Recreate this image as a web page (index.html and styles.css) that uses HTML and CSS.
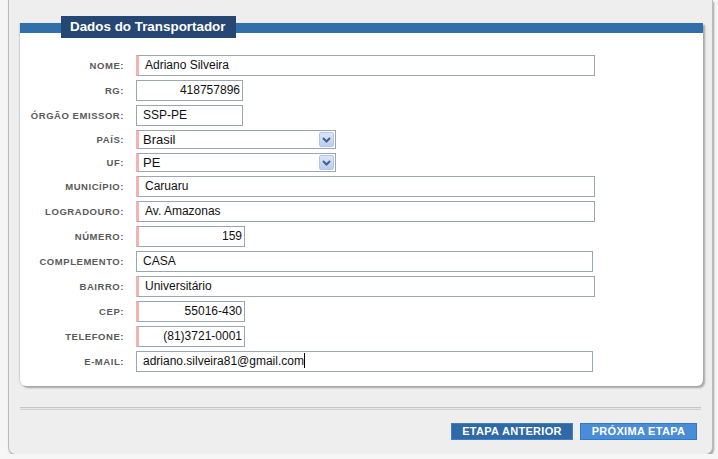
FILE: index.html
```html
<!DOCTYPE html>
<html lang="pt-BR">
<head>
<meta charset="utf-8">
<title>Dados do Transportador</title>
<link rel="stylesheet" href="styles.css">
</head>
<body>
<div class="panel">
  <div class="card">
    <div class="tab">Dados do Transportador</div>
    <div class="form">
      <div class="lbl">NOME:</div>
      <div class="field wide req">Adriano Silveira</div>

      <div class="lbl">RG:</div>
      <div class="field short num">418757896</div>

      <div class="lbl">ÓRGÃO EMISSOR:</div>
      <div class="field short">SSP-PE</div>

      <div class="lbl">PAÍS:</div>
      <div class="select req"><span class="sel-text">Brasil</span><span class="sel-btn"><svg width="9" height="6" viewBox="0 0 9 6"><path d="M1 1 L4.5 4.5 L8 1" fill="none" stroke="#4a5f86" stroke-width="2"/></svg></span></div>

      <div class="lbl">UF:</div>
      <div class="select req"><span class="sel-text">PE</span><span class="sel-btn"><svg width="9" height="6" viewBox="0 0 9 6"><path d="M1 1 L4.5 4.5 L8 1" fill="none" stroke="#4a5f86" stroke-width="2"/></svg></span></div>

      <div class="lbl">MUNICÍPIO:</div>
      <div class="field wide req">Caruaru</div>

      <div class="lbl">LOGRADOURO:</div>
      <div class="field wide req">Av. Amazonas</div>

      <div class="lbl">NÚMERO:</div>
      <div class="field short req num">159</div>

      <div class="lbl">COMPLEMENTO:</div>
      <div class="field wide">CASA</div>

      <div class="lbl">BAIRRO:</div>
      <div class="field wide req">Universitário</div>

      <div class="lbl">CEP:</div>
      <div class="field short req num">55016-430</div>

      <div class="lbl">TELEFONE:</div>
      <div class="field short req num">(81)3721-0001</div>

      <div class="lbl">E-MAIL:</div>
      <div class="field wide">adriano.silveira81@gmail.com<span class="caret"></span></div>
    </div>
  </div>
  <div class="sep"></div>
  <div class="actions">
    <button class="btn btn-prev">ETAPA ANTERIOR</button>
    <button class="btn btn-next">PRÓXIMA ETAPA</button>
  </div>
</div>
</body>
</html>
```
FILE: styles.css
```css
html, body {
  margin: 0;
  padding: 0;
  background: #f6f6f6;
}

body {
  font-family: "Liberation Sans", Arial, sans-serif;
}

.panel {
  margin-left: 8px;
  width: 705px;
  box-sizing: border-box;
  background: #eeeeee;
  border-left: 1px solid #b4bcc4;
  border-right: 1px solid #b4bcc4;
  border-radius: 0 0 7px 7px;
  box-shadow: 1px 2px 2px rgba(0, 0, 0, 0.35);
  padding: 23px 9px 14px 11px;
}

.card {
  background: #ffffff;
  border-top: 10px solid #316fab;
  border-radius: 0 0 6px 6px;
  box-shadow: 2px 2px 2px rgba(0, 0, 0, 0.3), -1px 0 1px rgba(0, 0, 0, 0.12);
  padding-bottom: 14px;
}

.tab {
  display: block;
  width: fit-content;
  margin: -17px 0 0 41px;
  height: 22px;
  line-height: 22px;
  padding: 0 10px 0 9px;
  background: #264673;
  color: #ffffff;
  font-weight: bold;
  font-size: 13.4px;
}

.form {
  display: grid;
  grid-template-columns: 104px auto;
  justify-content: start;
  column-gap: 12px;
  row-gap: 4px;
  padding-top: 17px;
  align-items: center;
}

.lbl {
  text-align: right;
  font-size: 9.5px;
  font-weight: bold;
  letter-spacing: 0.55px;
  color: #5a5a5a;
  white-space: nowrap;
}

.field {
  box-sizing: border-box;
  height: 21px;
  line-height: 19px;
  border: 1px solid #9ba7af;
  padding: 0 2px 0 6px;
  font-size: 12px;
  color: #111111;
  white-space: nowrap;
  overflow: hidden;
}

.field.req,
.select.req {
  border-left: 3px solid #f4b2b2;
}

.wide { width: 457px; }
.wide.req { width: 459px; }
.short { width: 107px; }
.short.req { width: 109px; }

.num { text-align: right; }

.caret {
  display: inline-block;
  width: 1px;
  height: 15px;
  background: #000000;
  vertical-align: -3px;
}

.select {
  box-sizing: border-box;
  width: 200px;
  height: 19px;
  border: 1px solid #9ba7af;
  display: flex;
  align-items: center;
  justify-content: space-between;
  padding: 0 1px 0 4px;
  font-size: 13px;
  color: #111111;
}

.sel-btn {
  box-sizing: border-box;
  width: 15px;
  height: 15px;
  border: 1px solid #b4c6ec;
  border-radius: 2px;
  background: linear-gradient(#dbe6fb, #b9cdf3);
  display: flex;
  align-items: center;
  justify-content: center;
}

.sep {
  margin: 21px 2px 0 0;
  height: 1px;
  border-top: 1px solid #c6c6c6;
  border-bottom: 1px solid #d2d2d2;
  background: #e6e6e6;
}

.actions {
  display: flex;
  justify-content: flex-end;
  gap: 7px;
  margin-top: 13px;
  padding-right: 6px;
}

.btn {
  box-sizing: border-box;
  height: 17px;
  padding: 0 9px;
  font-family: "Liberation Sans", Arial, sans-serif;
  font-size: 11px;
  font-weight: bold;
  letter-spacing: 0.3px;
  color: #ffffff;
  line-height: 15px;
  cursor: pointer;
}

.btn-prev {
  width: 122px;
  background: #2f69a6;
  border: 1px solid #3d7fc2;
}

.btn-next {
  width: 117px;
  background: #4a8dd6;
  border: 1px solid #2f7acb;
}
```
